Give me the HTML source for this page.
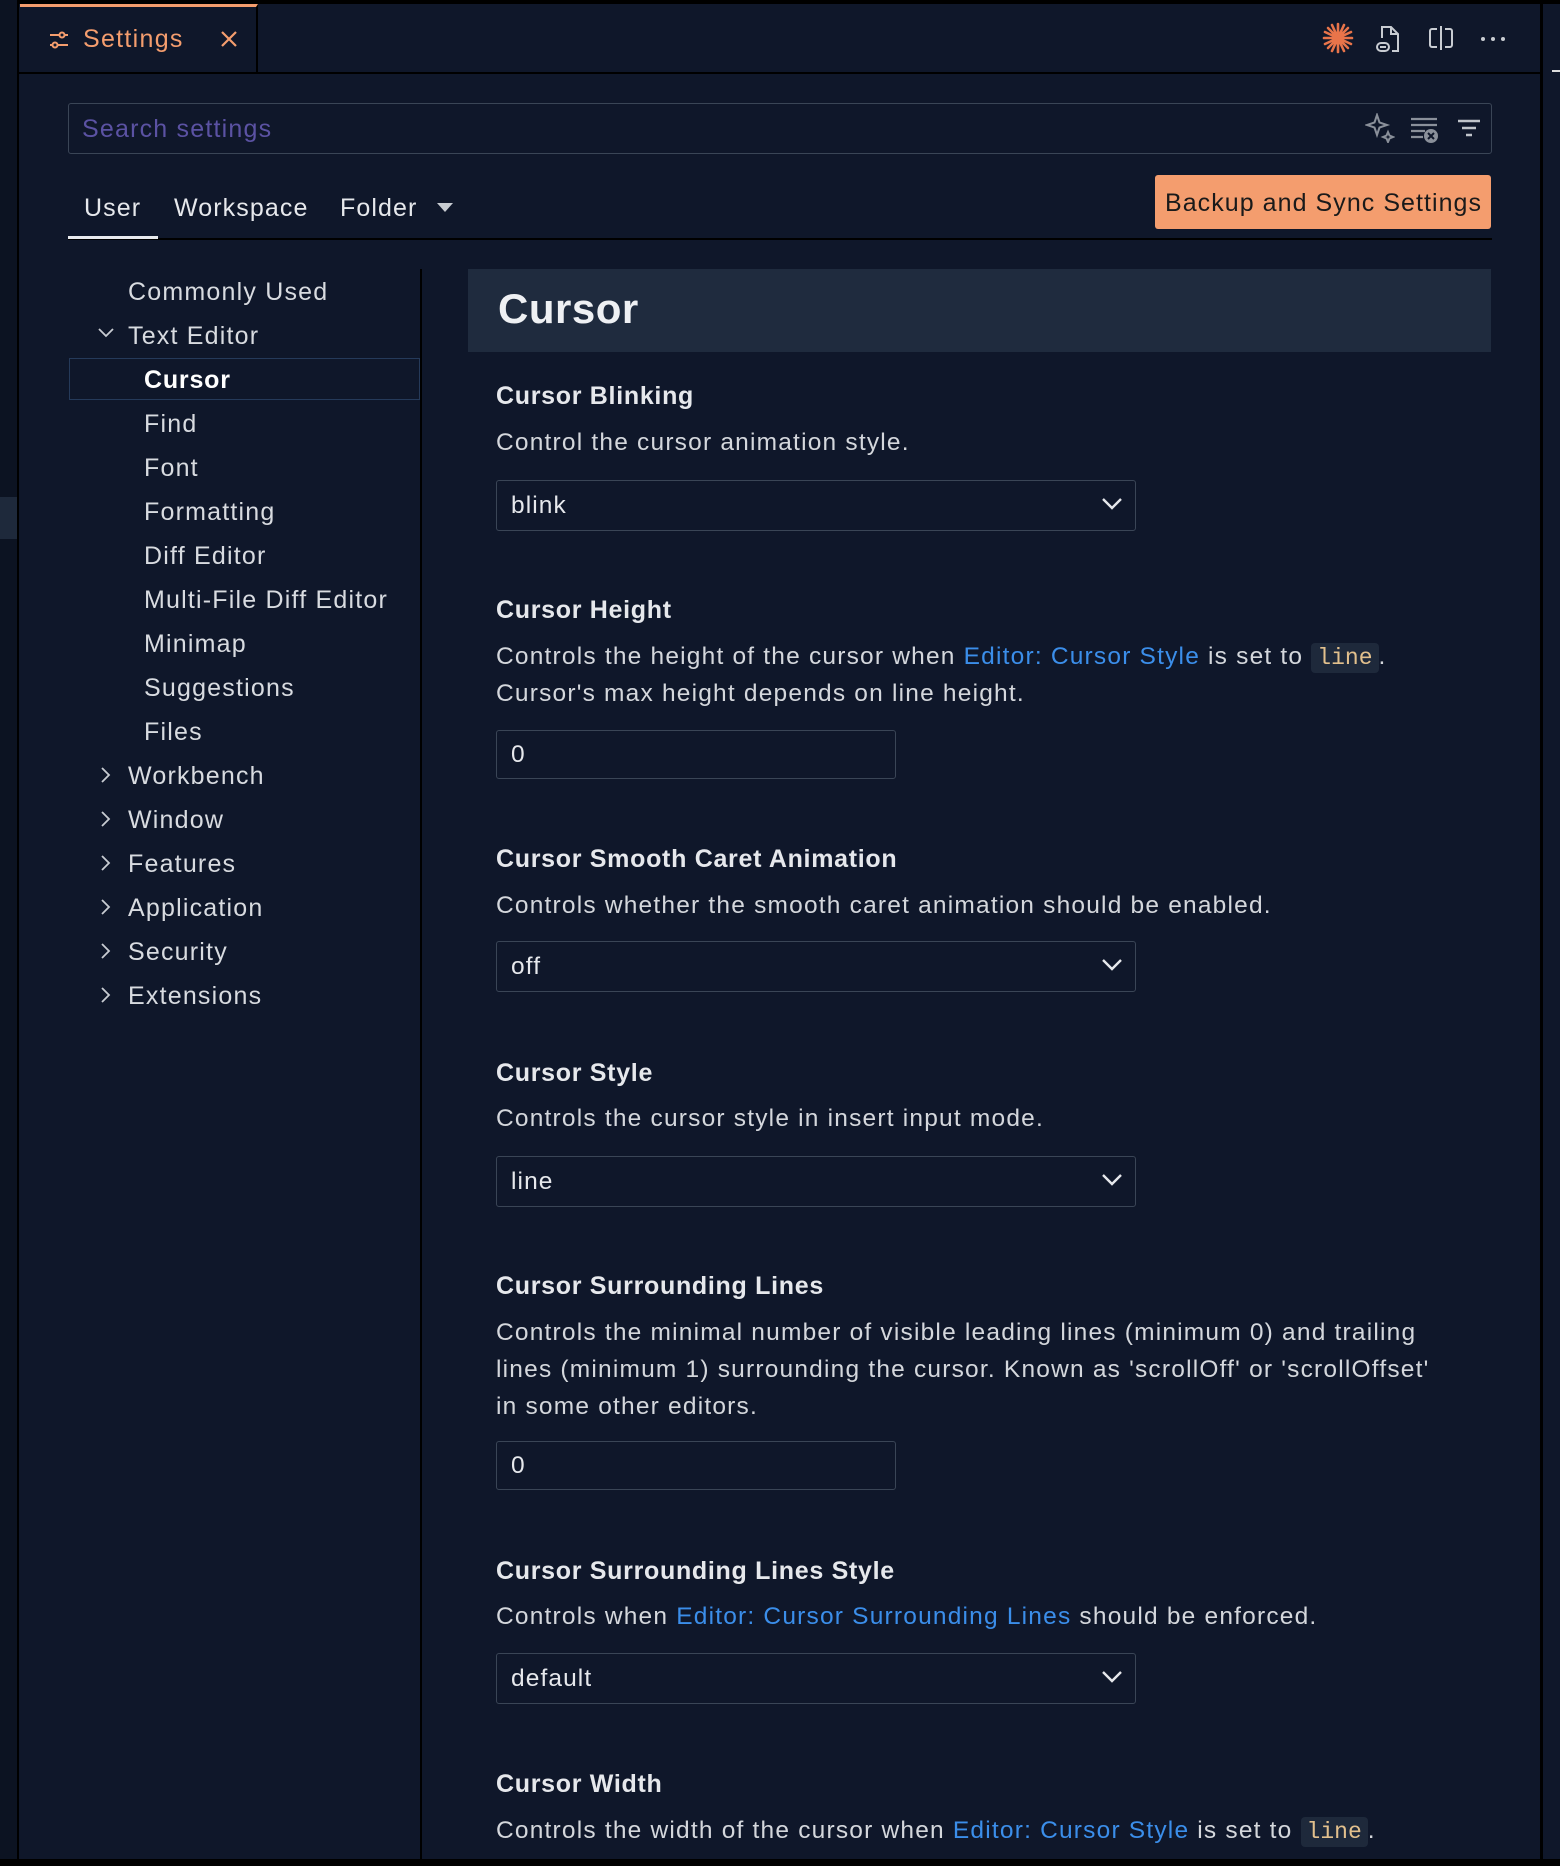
<!DOCTYPE html>
<html><head><meta charset="utf-8"><style>
*{box-sizing:border-box;margin:0;padding:0}
body{width:1560px;height:1866px;background:#0f172a;font-family:"Liberation Sans",sans-serif;color:#e2e4e8;position:relative;overflow:hidden;letter-spacing:1.1px}
.a{position:absolute;white-space:nowrap}
.t{font-size:25px;font-weight:bold;color:#e6e8ec;letter-spacing:0.7px}
.d{font-size:24.5px;color:#d4d7dc;letter-spacing:1.2px}
.sel{position:absolute;left:496px;width:640px;height:51px;border:1.5px solid #3a4556;border-radius:3px}
.sel span{position:absolute;left:14px;top:11px;font-size:24.5px;color:#e6e8ec}
.sel svg{position:absolute;right:12px;top:16px}
.inp{position:absolute;left:496px;width:400px;height:49px;border:1.5px solid #3a4556;border-radius:3px}
.inp span{position:absolute;left:14px;top:10px;font-size:24.5px;color:#e6e8ec}
a{color:#3b8eea;text-decoration:none}
code{font-family:"Liberation Mono",monospace;color:#e2c08d;background:#1e293b;padding:2px 6px;border-radius:4px;font-size:23px;letter-spacing:0}
.n{position:absolute;font-size:25px;color:#d8dbe0;white-space:nowrap;letter-spacing:1.2px}
.chev{position:absolute;left:98px}
</style></head><body>
<div class="a" style="left:0;top:0;width:1560px;height:4px;background:#000"></div>
<div class="a" style="left:0;top:0;width:19px;height:1866px;background:#0c1322;border-right:2px solid #000"></div>
<div class="a" style="left:0;top:497px;width:17px;height:42px;background:#1e293b"></div>
<div class="a" style="left:1540px;top:0;width:3px;height:1866px;background:#000"></div>
<div class="a" style="left:1552px;top:70px;width:8px;height:2px;background:#ddd"></div>
<div class="a" style="left:0;top:1859px;width:1560px;height:7px;background:#000"></div>
<!-- tab bar -->
<div class="a" style="left:19px;top:72px;width:1521px;height:2px;background:#000"></div>
<div class="a" style="left:20px;top:4px;width:238px;height:68px;border-top:3px solid #f49d6e;border-right:2px solid #000"></div>
<svg class="a" style="left:48px;top:29px" width="22" height="22" viewBox="0 0 22 22" stroke="#f49d6e" stroke-width="2" fill="none"><path d="M2 6h18M2 16h18"/><circle cx="14" cy="6" r="2.5" fill="#0f172a"/><circle cx="7" cy="16" r="2.5" fill="#0f172a"/></svg>
<div class="a" style="left:83px;top:25px;font-size:25px;color:#f49d6e;letter-spacing:1.3px">Settings</div>
<svg class="a" style="left:220px;top:30px" width="18" height="18" stroke="#f49d6e" stroke-width="2.2"><path d="M2 2L16 16M16 2L2 16"/></svg>
<svg class="a" style="left:1322px;top:22px" width="32" height="32" viewBox="0 0 32 32" stroke="#e8744a" stroke-width="2.6" stroke-linecap="round"><path d="M16 2v28M2 16h28M6 6l20 20M26 6L6 26M10 3l12 26M22 3L10 29M3 10l26 12M29 10L3 22"/></svg>
<svg class="a" style="left:1374px;top:24px" width="28" height="30" viewBox="0 0 28 30" stroke="#c8ccd2" stroke-width="2" fill="none"><path d="M8 14V3h9l7 7v17h-6M17 3v7h7"/><rect x="3" y="19" width="12" height="8" rx="4"/><path d="M6 23h6"/></svg>
<svg class="a" style="left:1427px;top:24px" width="28" height="28" viewBox="0 0 28 28" stroke="#c8ccd2" stroke-width="2" fill="none"><path d="M10 5H5a2 2 0 0 0-2 2v14a2 2 0 0 0 2 2h5M18 5h5a2 2 0 0 1 2 2v14a2 2 0 0 1-2 2h-5M14 2v24"/></svg>
<svg class="a" style="left:1480px;top:36px" width="26" height="6"><circle cx="3" cy="3" r="2" fill="#c8ccd2"/><circle cx="13" cy="3" r="2" fill="#c8ccd2"/><circle cx="23" cy="3" r="2" fill="#c8ccd2"/></svg>
<!-- search -->
<div class="a" style="left:68px;top:103px;width:1424px;height:51px;border:1.5px solid #3a4556;border-radius:3px"></div>
<div class="a" style="left:82px;top:115px;font-size:25px;color:#5b52a3;letter-spacing:1.2px">Search settings</div>
<svg class="a" style="left:1365px;top:113px" width="30" height="30" viewBox="0 0 30 30" stroke="#8a909a" stroke-width="2" fill="none"><path d="M12 2l2.5 7.5L22 12l-7.5 2.5L12 22l-2.5-7.5L2 12l7.5-2.5z"/><path d="M23 19l1.5 3.5L28 24l-3.5 1.5L23 29l-1.5-3.5L18 24l3.5-1.5z"/></svg>
<svg class="a" style="left:1410px;top:116px" width="30" height="28" viewBox="0 0 30 28" stroke="#8a909a" stroke-width="2.2"><path d="M1 3h26M1 9h26M1 15h14M1 21h12"/><circle cx="21" cy="20" r="7" fill="#8a909a" stroke="none"/><path d="M18 17l6 6M24 17l-6 6" stroke="#0f172a" stroke-width="2"/></svg>
<svg class="a" style="left:1457px;top:119px" width="24" height="18" stroke="#c0c4ca" stroke-width="2.4"><path d="M1 2h22M5 9h14M9 16h6"/></svg>
<!-- tabs -->
<div class="a" style="left:84px;top:194px;font-size:25px;color:#e6e8ec">User</div>
<div class="a" style="left:174px;top:194px;font-size:25px;color:#e6e8ec">Workspace</div>
<div class="a" style="left:340px;top:194px;font-size:25px;color:#e6e8ec">Folder</div>
<svg class="a" style="left:436px;top:202px" width="18" height="12"><path d="M1 1h16L9 10z" fill="#c8ccd2"/></svg>
<div class="a" style="left:68px;top:238px;width:1424px;height:2px;background:#000"></div>
<div class="a" style="left:68px;top:236px;width:90px;height:3px;background:#e8eaee"></div>
<div class="a" style="left:1155px;top:175px;width:336px;height:54px;background:#f49d6e;border-radius:3px"></div>
<div class="a" style="left:1165px;top:189px;font-size:25px;color:#1a1a1a;letter-spacing:1.05px">Backup and Sync Settings</div>
<!-- sidebar -->
<div class="a" style="left:420px;top:269px;width:2px;height:1590px;background:#000"></div>
<div class="a" style="left:69px;top:358px;width:351px;height:42px;border:1.5px solid #253a5a"></div>
<div class="n" style="left:128px;top:278px">Commonly Used</div>
<svg class="chev" style="top:327px" width="16" height="12" stroke="#c8ccd2" stroke-width="1.8" fill="none"><path d="M1 2l7 7 7-7"/></svg>
<div class="n" style="left:128px;top:322px">Text Editor</div>
<div class="n" style="left:144px;top:366px;font-weight:bold;color:#fff;letter-spacing:0.8px">Cursor</div>
<div class="n" style="left:144px;top:410px">Find</div>
<div class="n" style="left:144px;top:454px">Font</div>
<div class="n" style="left:144px;top:498px">Formatting</div>
<div class="n" style="left:144px;top:542px">Diff Editor</div>
<div class="n" style="left:144px;top:586px">Multi-File Diff Editor</div>
<div class="n" style="left:144px;top:630px">Minimap</div>
<div class="n" style="left:144px;top:674px">Suggestions</div>
<div class="n" style="left:144px;top:718px">Files</div>
<div class="n" style="left:128px;top:762px">Workbench</div>
<div class="n" style="left:128px;top:806px">Window</div>
<div class="n" style="left:128px;top:850px">Features</div>
<div class="n" style="left:128px;top:894px">Application</div>
<div class="n" style="left:128px;top:938px">Security</div>
<div class="n" style="left:128px;top:982px">Extensions</div>
<svg class="a" style="left:100px;top:767px" width="14" height="250" stroke="#c8ccd2" stroke-width="1.8" fill="none"><path d="M2 1l7 7-7 7M2 45l7 7-7 7M2 89l7 7-7 7M2 133l7 7-7 7M2 177l7 7-7 7M2 221l7 7-7 7"/></svg>
<!-- main -->
<div class="a" style="left:468px;top:269px;width:1023px;height:83px;background:#1f2b3e"></div>
<div class="a" style="left:498px;top:285px;font-size:42px;font-weight:bold;color:#eef0f3;letter-spacing:0.5px">Cursor</div>

<div class="a t" style="left:496px;top:382px">Cursor Blinking</div>
<div class="a d" style="left:496px;top:429px">Control the cursor animation style.</div>
<div class="sel" style="top:480px"><span>blink</span><svg width="22" height="14" stroke="#e6e8ec" stroke-width="2.4" fill="none"><path d="M2 2l9 9 9-9"/></svg></div>

<div class="a t" style="left:496px;top:596px">Cursor Height</div>
<div class="a d" style="left:496px;top:643px">Controls the height of the cursor when <a>Editor: Cursor Style</a> is set to <code>line</code>.</div>
<div class="a d" style="left:496px;top:680px">Cursor's max height depends on line height.</div>
<div class="inp" style="top:730px"><span>0</span></div>

<div class="a t" style="left:496px;top:845px">Cursor Smooth Caret Animation</div>
<div class="a d" style="left:496px;top:892px">Controls whether the smooth caret animation should be enabled.</div>
<div class="sel" style="top:941px"><span>off</span><svg width="22" height="14" stroke="#e6e8ec" stroke-width="2.4" fill="none"><path d="M2 2l9 9 9-9"/></svg></div>

<div class="a t" style="left:496px;top:1059px">Cursor Style</div>
<div class="a d" style="left:496px;top:1105px">Controls the cursor style in insert input mode.</div>
<div class="sel" style="top:1156px"><span>line</span><svg width="22" height="14" stroke="#e6e8ec" stroke-width="2.4" fill="none"><path d="M2 2l9 9 9-9"/></svg></div>

<div class="a t" style="left:496px;top:1272px">Cursor Surrounding Lines</div>
<div class="a d" style="left:496px;top:1319px">Controls the minimal number of visible leading lines (minimum 0) and trailing</div>
<div class="a d" style="left:496px;top:1356px">lines (minimum 1) surrounding the cursor. Known as 'scrollOff' or 'scrollOffset'</div>
<div class="a d" style="left:496px;top:1393px">in some other editors.</div>
<div class="inp" style="top:1441px"><span>0</span></div>

<div class="a t" style="left:496px;top:1557px">Cursor Surrounding Lines Style</div>
<div class="a d" style="left:496px;top:1603px">Controls when <a>Editor: Cursor Surrounding Lines</a> should be enforced.</div>
<div class="sel" style="top:1653px"><span>default</span><svg width="22" height="14" stroke="#e6e8ec" stroke-width="2.4" fill="none"><path d="M2 2l9 9 9-9"/></svg></div>

<div class="a t" style="left:496px;top:1770px">Cursor Width</div>
<div class="a d" style="left:496px;top:1817px">Controls the width of the cursor when <a>Editor: Cursor Style</a> is set to <code>line</code>.</div>
</body></html>
